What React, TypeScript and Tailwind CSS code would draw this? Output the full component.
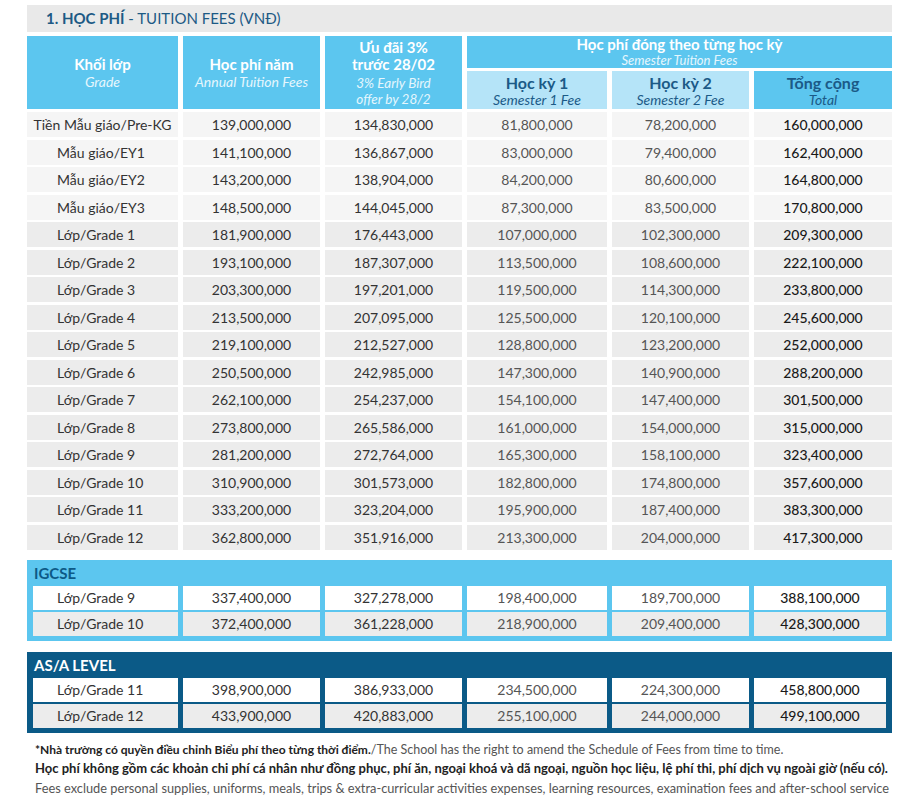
import React from 'react';

const rows = [
  ['Tiền Mẫu giáo/Pre-KG', '139,000,000', '134,830,000', '81,800,000', '78,200,000', '160,000,000'],
  ['Mẫu giáo/EY1', '141,100,000', '136,867,000', '83,000,000', '79,400,000', '162,400,000'],
  ['Mẫu giáo/EY2', '143,200,000', '138,904,000', '84,200,000', '80,600,000', '164,800,000'],
  ['Mẫu giáo/EY3', '148,500,000', '144,045,000', '87,300,000', '83,500,000', '170,800,000'],
  ['Lớp/Grade 1', '181,900,000', '176,443,000', '107,000,000', '102,300,000', '209,300,000'],
  ['Lớp/Grade 2', '193,100,000', '187,307,000', '113,500,000', '108,600,000', '222,100,000'],
  ['Lớp/Grade 3', '203,300,000', '197,201,000', '119,500,000', '114,300,000', '233,800,000'],
  ['Lớp/Grade 4', '213,500,000', '207,095,000', '125,500,000', '120,100,000', '245,600,000'],
  ['Lớp/Grade 5', '219,100,000', '212,527,000', '128,800,000', '123,200,000', '252,000,000'],
  ['Lớp/Grade 6', '250,500,000', '242,985,000', '147,300,000', '140,900,000', '288,200,000'],
  ['Lớp/Grade 7', '262,100,000', '254,237,000', '154,100,000', '147,400,000', '301,500,000'],
  ['Lớp/Grade 8', '273,800,000', '265,586,000', '161,000,000', '154,000,000', '315,000,000'],
  ['Lớp/Grade 9', '281,200,000', '272,764,000', '165,300,000', '158,100,000', '323,400,000'],
  ['Lớp/Grade 10', '310,900,000', '301,573,000', '182,800,000', '174,800,000', '357,600,000'],
  ['Lớp/Grade 11', '333,200,000', '323,204,000', '195,900,000', '187,400,000', '383,300,000'],
  ['Lớp/Grade 12', '362,800,000', '351,916,000', '213,300,000', '204,000,000', '417,300,000'],
];

const igcse = [
  ['Lớp/Grade 9', '337,400,000', '327,278,000', '198,400,000', '189,700,000', '388,100,000'],
  ['Lớp/Grade 10', '372,400,000', '361,228,000', '218,900,000', '209,400,000', '428,300,000'],
];

const alevel = [
  ['Lớp/Grade 11', '398,900,000', '386,933,000', '234,500,000', '224,300,000', '458,800,000'],
  ['Lớp/Grade 12', '433,900,000', '420,883,000', '255,100,000', '244,000,000', '499,100,000'],
];

function Cells({ row, bg, centerFirst, padFirst }: { row: string[]; bg: string; centerFirst?: boolean; padFirst: string }) {
  return (
    <>
      <div className={`${bg} flex items-center ${centerFirst ? 'justify-center' : padFirst} text-[14px] text-[#333]`}>{row[0]}</div>
      <div className={`${bg} flex items-center justify-center text-[14px] text-[#333]`}>{row[1]}</div>
      <div className={`${bg} flex items-center justify-center text-[14px] text-[#333]`}>{row[2]}</div>
      <div className={`${bg} flex items-center justify-center text-[14px] text-[#555]`}>{row[3]}</div>
      <div className={`${bg} flex items-center justify-center text-[14px] text-[#555]`}>{row[4]}</div>
      <div className={`${bg} flex items-center justify-center text-[14px] font-medium text-[#1a1a1a]`}>{row[5]}</div>
    </>
  );
}

function Band({ title, rows, boxBg, titleColor }: { title: string; rows: string[][]; boxBg: string; titleColor: string }) {
  return (
    <div className={`${boxBg} px-[6px] pb-[5px]`}>
      <div className={`h-[26px] flex items-center pt-[2px] pl-[1px] text-[15px] font-bold ${titleColor}`}>{title}</div>
      <div className="grid grid-cols-[145px_137px_137px_140px_137px_132px] gap-x-[5px] gap-y-[2px] auto-rows-[24px]">
        {rows.map((r, i) => (
          <Cells key={i} row={r} bg={i % 2 === 0 ? 'bg-white' : 'bg-[#ececec]'} padFirst="pl-[24px]" />
        ))}
      </div>
    </div>
  );
}

export default function App() {
  return (
    <div className="w-[914px] h-[798px] bg-white pt-[5px] pl-[27px] font-['Lato',sans-serif] overflow-hidden">
      <div className="w-[865px]">
        <div className="h-[27px] bg-[#e9e9e9] flex items-center pl-[19px] text-[15px] text-[#1d5a85]">
          <span className="font-bold">1. HỌC PHÍ</span>
          <span>&nbsp;- TUITION FEES (VNĐ)</span>
        </div>

        <div className="mt-[4px] grid grid-cols-[151px_137px_137px_140px_137px_138px] grid-rows-[32px_38px] gap-x-[5px] gap-y-[3px]">
          <div className="row-span-2 bg-[#5cc6ef] flex flex-col items-center justify-center text-white pt-[1px]">
            <span className="font-bold text-[15px] leading-[17px]">Khối lớp</span>
            <span className="italic text-[14px] leading-[17px] text-[#e6f6fd]">Grade</span>
          </div>
          <div className="row-span-2 bg-[#5cc6ef] flex flex-col items-center justify-center text-white pt-[1px]">
            <span className="font-bold text-[15px] leading-[17px]">Học phí năm</span>
            <span className="italic text-[14px] leading-[17px] text-[#e6f6fd]">Annual Tuition Fees</span>
          </div>
          <div className="row-span-2 bg-[#5cc6ef] flex flex-col items-center justify-center text-white">
            <span className="font-bold text-[15px] leading-[17px]">Ưu đãi 3%</span>
            <span className="font-bold text-[15px] leading-[17px]">trước 28/02</span>
            <span className="italic text-[13.5px] leading-[16px] mt-[2px] text-[#e6f6fd]">3% Early Bird</span>
            <span className="italic text-[13.5px] leading-[16px] text-[#e6f6fd]">offer by 28/2</span>
          </div>
          <div className="col-span-3 bg-[#5cc6ef] flex flex-col items-center justify-center text-white">
            <span className="font-bold text-[15px] leading-[16px]">Học phí đóng theo từng học kỳ</span>
            <span className="italic text-[13px] leading-[16px] text-[#e6f6fd]">Semester Tuition Fees</span>
          </div>
          <div className="bg-[#b5e4f8] flex flex-col items-center justify-center text-[#1b5a87] leading-[17px] pt-[1px]">
            <span className="font-bold text-[16px]">Học kỳ 1</span>
            <span className="italic text-[14px]">Semester 1 Fee</span>
          </div>
          <div className="bg-[#b5e4f8] flex flex-col items-center justify-center text-[#1b5a87] leading-[17px] pt-[1px]">
            <span className="font-bold text-[16px]">Học kỳ 2</span>
            <span className="italic text-[14px]">Semester 2 Fee</span>
          </div>
          <div className="bg-[#5cc6ef] flex flex-col items-center justify-center text-[#1b5a87] leading-[17px] pt-[1px]">
            <span className="font-bold text-[16px]">Tổng cộng</span>
            <span className="italic text-[14px]">Total</span>
          </div>
        </div>

        <div className="mt-[3px] grid grid-cols-[151px_137px_137px_140px_137px_138px] gap-x-[5px] gap-y-[2.5px] auto-rows-[25px]">
          {rows.map((r, i) => (
            <Cells key={i} row={r} bg={i < 4 ? 'bg-[#f5f5f5]' : 'bg-[#ececec]'} centerFirst={i === 0} padFirst="pl-[30px]" />
          ))}
        </div>

        <div className="mt-[10px]">
          <Band title="IGCSE" rows={igcse} boxBg="bg-[#5cc6ef]" titleColor="text-[#0d5a87]" />
        </div>
        <div className="mt-[11px]">
          <Band title="AS/A LEVEL" rows={alevel} boxBg="bg-[#0b5a87]" titleColor="text-white" />
        </div>

        <div className="mt-[5px] pl-[8px] leading-[19.5px] whitespace-nowrap">
          <div>
            <span className="font-bold text-[12px] text-[#222]">*Nhà trường có quyền điều chỉnh Biểu phí theo từng thời điểm.</span>
            <span className="text-[12.5px] text-[#555]">/The School has the right to amend the Schedule of Fees from time to time.</span>
          </div>
          <div className="font-bold text-[13px] text-[#222]">
            Học phí không gồm các khoản chi phí cá nhân như đồng phục, phí ăn, ngoại khoá và dã ngoại, nguồn học liệu, lệ phí thi, phí dịch vụ ngoài giờ (nếu có).
          </div>
          <div className="text-[12.8px] text-[#555]">
            Fees exclude personal supplies, uniforms, meals, trips &amp; extra-curricular activities expenses, learning resources, examination fees and after-school service
          </div>
        </div>
      </div>
    </div>
  );
}
